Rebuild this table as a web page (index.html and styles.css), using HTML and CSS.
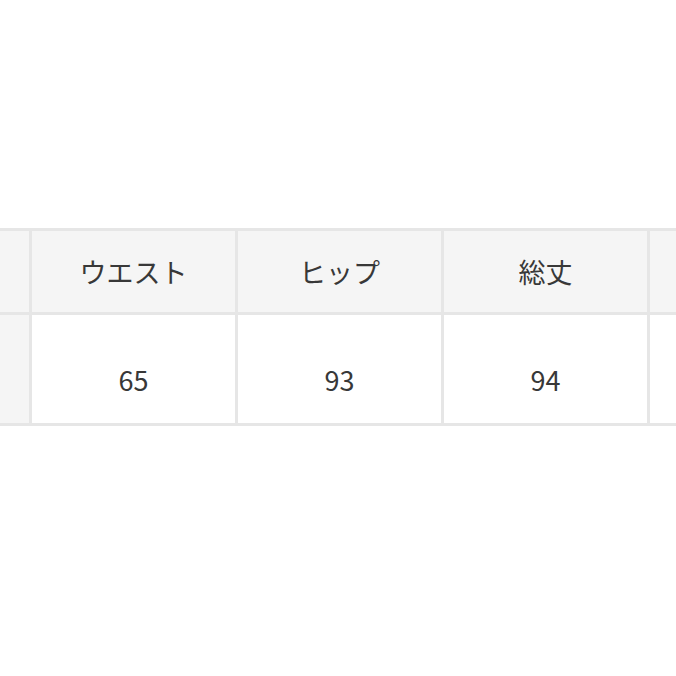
FILE: index.html
```html
<!DOCTYPE html>
<html lang="ja">
<head>
<meta charset="utf-8">
<link rel="stylesheet" href="styles.css">
</head>
<body>
<div class="page">
  <table class="size-table">
    <colgroup>
      <col class="c"><col class="c"><col class="c"><col class="c"><col class="c">
    </colgroup>
    <tr class="head">
      <th class="side"></th>
      <th>ウエスト</th>
      <th>ヒップ</th>
      <th>総丈</th>
      <th></th>
    </tr>
    <tr class="data">
      <th class="side"></th>
      <td>65</td>
      <td>93</td>
      <td>94</td>
      <td></td>
    </tr>
  </table>
</div>
</body>
</html>
```
FILE: styles.css
```css
html, body {
  margin: 0;
  padding: 0;
  background: #ffffff;
  overflow: hidden;
}
.page {
  width: 676px;
  height: 676px;
  overflow: hidden;
  padding-top: 228px;
  box-sizing: border-box;
}
.size-table {
  margin-left: -177px;
  border-collapse: collapse;
  table-layout: fixed;
  width: 1030px;
  font-family: "Noto Sans CJK JP", "Noto Sans", sans-serif;
  font-size: 27px;
  color: #383838;
}
.c { width: 206px; }
.size-table th,
.size-table td {
  border: 3px solid #e6e6e6;
  text-align: center;
  font-weight: 400;
  padding: 0;
  line-height: 1.2;
}
.head th {
  height: 79px;
  background: #f5f5f5;
  vertical-align: middle;
  padding-top: 2px;
}
.data td,
.data th {
  height: 86px;
  padding-top: 22px;
  vertical-align: middle;
  background: #ffffff;
}
.data th.side {
  background: #f5f5f5;
}
```
